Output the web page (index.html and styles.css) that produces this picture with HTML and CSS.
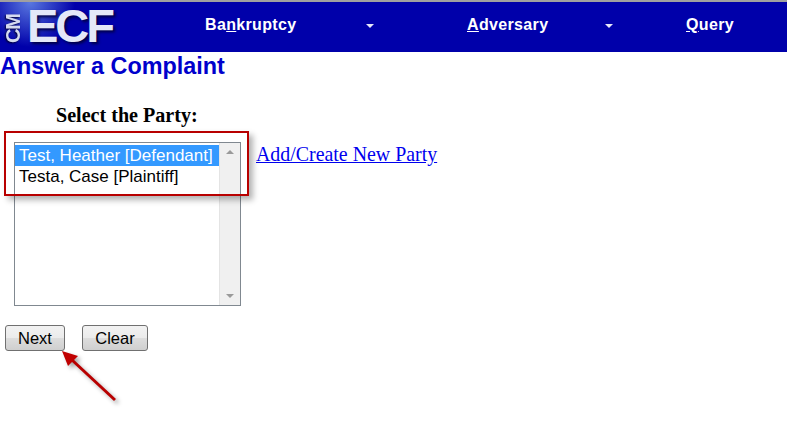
FILE: index.html
```html
<!DOCTYPE html>
<html>
<head>
<meta charset="utf-8">
	<title>Answer a Complaint</title>
	<link rel="stylesheet" href="styles.css">
</head>
<body>
	<div class="topBar">
		<div class="logo">
			<span class="logoCm">CM</span>
			<span class="logoEcf">ECF</span>
		</div>
		<div class="menu">
			<span class="menuItem itemBankruptcy">Ba<u>n</u>kruptcy</span>
			<span class="menuArrow arrowBankruptcy"></span>
			<span class="menuItem itemAdversary"><u>A</u>dversary</span>
			<span class="menuArrow arrowAdversary"></span>
			<span class="menuItem"><u>Q</u>uery</span>
		</div>
	</div>
	<h1 class="pageTitle">Answer a Complaint</h1>
	<div class="partyForm">
		<div class="partyLabel">Select the Party:</div>
		<div class="partyRow">
			<div class="listBox">
				<div class="options">
					<div class="option selected">Test, Heather [Defendant]</div>
					<div class="option">Testa, Case [Plaintiff]</div>
				</div>
				<div class="scrollBar">
					<span class="scrollUp"></span>
					<span class="scrollDown"></span>
				</div>
			</div>
			<a class="addParty" href="#">Add/Create New Party</a>
		</div>
		<div class="buttons">
			<button class="btn btnNext">Next</button>
			<button class="btn btnClear">Clear</button>
		</div>
	</div>
	<!-- red markup drawn over the page -->
	<div class="redBox"></div>
	<svg class="redArrow" width="70" height="70" viewBox="0 0 70 70">
		<path d="M54 50 L11 10" stroke="#b80000" stroke-width="3" fill="none"/>
		<path d="M1 1 L17 6 L7 16 Z" fill="#c00000"/>
	</svg>
</body>
</html>
```

FILE: styles.css
```css
html, body{
	margin: 0px;
	padding: 0px;
	background-color: #FFFFFF;
}
.topBar{
	display: flex;
	height: 50px;
	border-top: 2px solid #A0A0A0;
	background-color: #0000AA;
	overflow: hidden;
}
.logo{
	display: flex;
	align-items: center;
	width: 205px;
	flex-shrink: 0;
	background: radial-gradient(circle at 30px 0px, #5A78E0 0px, #0000AA 45px);
}
.logoCm{
	width: 20px;
	margin: 3px 0px 0px 3px;
	writing-mode: vertical-rl;
	transform: rotate(180deg);
	font-family: "Liberation Sans", sans-serif;
	font-weight: bold;
	font-size: 20px;
	line-height: 20px;
	letter-spacing: -1px;
	color: #D4DAF0;
	text-shadow: -1px -1px 2px #000033;
	white-space: nowrap;
}
.logoEcf{
	margin: 0px 0px 3px 4px;
	font-family: "Liberation Sans", sans-serif;
	font-weight: bold;
	font-size: 47px;
	letter-spacing: -3px;
	color: #E4E8F8;
	text-shadow: 2px 2px 3px #000044;
}
.menu{
	display: flex;
	align-items: center;
	height: 45px;
}
.menuItem{
	font-family: "Liberation Sans", sans-serif;
	font-weight: bold;
	font-size: 16px;
	letter-spacing: 0.35px;
	color: #FFFFFF;
	white-space: nowrap;
}
.menuArrow{
	width: 0px;
	height: 0px;
	margin-top: 2px;
	border-left: 4px solid transparent;
	border-right: 4px solid transparent;
	border-top: 4px solid #E8E8F8;
}
.itemBankruptcy{
	width: 161px;
}
.arrowBankruptcy{
	margin-right: 93px;
}
.itemAdversary{
	width: 138px;
}
.arrowAdversary{
	margin-right: 73px;
}
.pageTitle{
	margin: 0px;
	height: 28px;
	font-family: "Liberation Sans", sans-serif;
	font-weight: bold;
	font-size: 23.4px;
	line-height: 28px;
	color: #0000CC;
}
.partyLabel{
	margin: 22px 0px 0px 56px;
	height: 27px;
	font-family: "Liberation Serif", serif;
	font-weight: bold;
	font-size: 20.1px;
	line-height: 27px;
	color: #000000;
}
.partyRow{
	display: flex;
	align-items: flex-start;
	margin: 13px 0px 0px 14px;
}
.listBox{
	display: flex;
	width: 225px;
	height: 162px;
	border: 1px solid #808890;
}
.options{
	flex: 1;
	padding-top: 2px;
	font-family: "Liberation Sans", sans-serif;
	font-size: 17px;
	color: #000000;
}
.option{
	height: 21px;
	line-height: 21px;
	padding-left: 4px;
	white-space: nowrap;
}
.selected{
	background-color: #3399FF;
	color: #FFFFFF;
}
.scrollBar{
	display: flex;
	flex-direction: column;
	justify-content: space-between;
	align-items: center;
	width: 21px;
	padding: 7px 0px;
	box-sizing: border-box;
	background-color: #F0F0F0;
	border-left: 1px solid #E4E4E4;
}
.scrollUp{
	border-left: 4px solid transparent;
	border-right: 4px solid transparent;
	border-bottom: 4px solid #9A9A9A;
}
.scrollDown{
	border-left: 4px solid transparent;
	border-right: 4px solid transparent;
	border-top: 4px solid #9A9A9A;
}
.addParty{
	margin: 1px 0px 0px 15px;
	font-family: "Liberation Serif", serif;
	font-size: 19.9px;
	line-height: 22px;
	color: #0000EE;
}
.buttons{
	display: flex;
	gap: 17px;
	margin: 19px 0px 0px 5px;
}
.btn{
	height: 26px;
	padding: 1px 0px 0px 0px;
	border: 1px solid #707070;
	border-radius: 3px;
	background: linear-gradient(#F2F2F2 0%, #EBEBEB 50%, #DDDDDD 50%, #CFCFCF 100%);
	font-family: "Liberation Sans", sans-serif;
	font-size: 16.5px;
	color: #000000;
}
.btnNext{
	width: 60px;
}
.btnClear{
	width: 66px;
}
.redBox{
	position: absolute;
	left: 4px;
	top: 131px;
	width: 241px;
	height: 61px;
	border: 2px solid #B80000;
	box-shadow: 4px 4px 6px rgba(0, 0, 0, 0.3);
}
.redArrow{
	position: absolute;
	left: 61px;
	top: 350px;
	filter: drop-shadow(3px 3px 2px rgba(0, 0, 0, 0.35));
}
```
